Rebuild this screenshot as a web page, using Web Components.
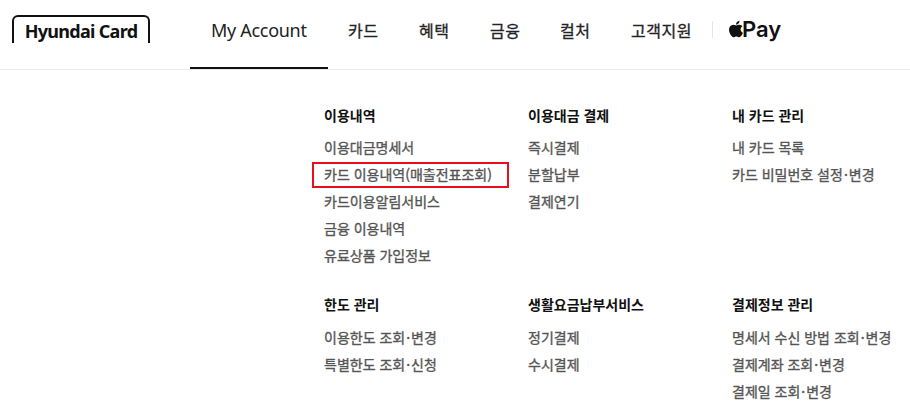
<!DOCTYPE html>
<html lang="ko">
<head>
<meta charset="utf-8">
<title>Hyundai Card</title>
<style>
    html, body { margin: 0; background: #fff; overflow: hidden; }
    body { font-family: "Noto Sans CJK KR", "Noto Sans", sans-serif; }
    .dot { margin: 0 1px; }
</style>
</head>
<body>
<hc-header>
    <hc-logo slot="logo"></hc-logo>
    <hc-nav-item active style="width:138px">My Account</hc-nav-item>
    <hc-nav-item style="width:71px">카드</hc-nav-item>
    <hc-nav-item style="width:71px">혜택</hc-nav-item>
    <hc-nav-item style="width:70px">금융</hc-nav-item>
    <hc-nav-item style="width:71px">컬처</hc-nav-item>
    <hc-nav-item style="width:101px">고객지원</hc-nav-item>
    <hc-apple-pay></hc-apple-pay>
</hc-header>
<hc-menu>
    <hc-group title="이용내역">
        <hc-link>이용대금명세서</hc-link>
        <hc-link marked>카드 이용내역(매출전표조회)</hc-link>
        <hc-link>카드이용알림서비스</hc-link>
        <hc-link>금융 이용내역</hc-link>
        <hc-link>유료상품 가입정보</hc-link>
    </hc-group>
    <hc-group title="이용대금 결제">
        <hc-link>즉시결제</hc-link>
        <hc-link>분할납부</hc-link>
        <hc-link>결제연기</hc-link>
    </hc-group>
    <hc-group title="내 카드 관리">
        <hc-link>내 카드 목록</hc-link>
        <hc-link>카드 비밀번호 설정<span class="dot">·</span>변경</hc-link>
    </hc-group>
    <hc-group title="한도 관리">
        <hc-link>이용한도 조회<span class="dot">·</span>변경</hc-link>
        <hc-link>특별한도 조회<span class="dot">·</span>신청</hc-link>
    </hc-group>
    <hc-group title="생활요금납부서비스">
        <hc-link>정기결제</hc-link>
        <hc-link>수시결제</hc-link>
    </hc-group>
    <hc-group title="결제정보 관리">
        <hc-link>명세서 수신 방법 조회<span class="dot">·</span>변경</hc-link>
        <hc-link>결제계좌 조회<span class="dot">·</span>변경</hc-link>
        <hc-link>결제일 조회<span class="dot">·</span>변경</hc-link>
    </hc-group>
</hc-menu>
<script>
class HcBase extends HTMLElement {
    constructor() {
        super();
        const shadow = this.attachShadow({ mode: 'open' });
        shadow.appendChild(this.constructor.template.content.cloneNode(true));
    }

    static make(html) {
        const template = document.createElement('template');
        template.innerHTML = html;
        return template;
    }
}

class HcHeader extends HcBase {
    static template = HcBase.make(`
        <style>
            :host {
                display: flex;
                height: 69px;
                border-bottom: 1px solid #eaeaea;
                box-sizing: content-box;
            }
            .logo { width: 190px; flex: none; }
            nav { display: flex; align-items: stretch; }
        </style>
        <div class="logo"><slot name="logo"></slot></div>
        <nav><slot></slot></nav>
    `);
}

class HcLogo extends HcBase {
    static template = HcBase.make(`
        <style>
            :host {
                display: flex;
                justify-content: center;
                box-sizing: border-box;
                width: 138px;
                height: 28px;
                margin: 15px 0 0 12px;
                border: 2px solid #111;
                border-bottom: 0;
                border-radius: 6px 6px 0 0;
                font: 700 18px/28px "Noto Sans", sans-serif;
                letter-spacing: -.7px;
                color: #111;
                white-space: nowrap;
            }
        </style>
        <span>Hyundai Card</span>
    `);
}

class HcNavItem extends HcBase {
    static template = HcBase.make(`
        <style>
            :host {
                display: block;
                box-sizing: border-box;
                height: 69px;
                padding: 18px 0 0 20px;
                font: 400 16px/24px "Noto Sans CJK KR", sans-serif;
                -webkit-text-stroke: .3px #222;
                letter-spacing: .5px;
                color: #222;
                white-space: nowrap;
            }
            :host([active]) {
                border-bottom: 2px solid #111;
                padding-left: 21px;
                font: 400 18px/24px "Noto Sans", sans-serif;
                letter-spacing: -.3px;
                -webkit-text-stroke: 0;
            }
        </style>
        <slot></slot>
    `);
}

class HcApplePay extends HcBase {
    static template = HcBase.make(`
        <style>
            :host {
                display: flex;
                align-items: center;
                height: 17px;
                margin-top: 21px;
                padding-left: 15px;
                border-left: 1px solid #e5e5e5;
                font: 600 22px/17px "Inter", sans-serif;
                color: #111;
            }
            svg { width: 22px; height: 22px; margin: -1px -5px 0 -3px; fill: #111; }
        </style>
        <svg viewBox="0 0 24 24"><path d="M17.05 20.28c-.98.95-2.05.8-3.08.35-1.09-.46-2.09-.48-3.24 0-1.44.62-2.2.44-3.06-.35C2.79 15.25 3.51 7.59 9.05 7.31c1.35.07 2.29.74 3.08.8 1.18-.24 2.31-.93 3.57-.84 1.51.12 2.65.72 3.4 1.8-3.12 1.87-2.38 5.98.48 7.13-.57 1.5-1.31 2.99-2.54 4.09zM12.03 7.25c-.15-2.23 1.66-4.07 3.74-4.25.29 2.58-2.34 4.5-3.74 4.25z"/></svg>
        <span>Pay</span>
    `);
}

class HcMenu extends HcBase {
    static template = HcBase.make(`
        <style>
            :host {
                display: grid;
                grid-template-columns: repeat(3, 204px);
                row-gap: 22px;
                padding: 32px 0 0 324px;
            }
        </style>
        <slot></slot>
    `);
}

class HcGroup extends HcBase {
    static template = HcBase.make(`
        <style>
            :host { display: block; }
            h3 {
                margin: 0 0 5px;
                font: 700 14px/27px "Noto Sans CJK KR", sans-serif;
                color: #111;
            }
            :host(:nth-child(n+4)) h3 { margin-bottom: 6px; }
        </style>
        <h3></h3>
        <slot></slot>
    `);

    connectedCallback() {
        this.shadowRoot.querySelector('h3').textContent = this.getAttribute('title');
    }
}

class HcLink extends HcBase {
    static template = HcBase.make(`
        <style>
            :host {
                display: flow-root;
                height: 27px;
                font: 400 14px/27px "Noto Sans CJK KR", sans-serif;
                -webkit-text-stroke: .35px #555;
                color: #555;
                white-space: nowrap;
            }
            a { display: block; width: fit-content; }
            :host([marked]) a {
                box-sizing: border-box;
                width: 197px;
                height: 26px;
                margin: 1px 0 0 -12px;
                padding-left: 12px;
                line-height: 25px;
                outline: 2px solid #e60f1e;
                outline-offset: -2px;
            }
        </style>
        <a><slot></slot></a>
    `);
}

customElements.define('hc-header', HcHeader);
customElements.define('hc-logo', HcLogo);
customElements.define('hc-nav-item', HcNavItem);
customElements.define('hc-apple-pay', HcApplePay);
customElements.define('hc-menu', HcMenu);
customElements.define('hc-group', HcGroup);
customElements.define('hc-link', HcLink);
</script>
</body>
</html>
